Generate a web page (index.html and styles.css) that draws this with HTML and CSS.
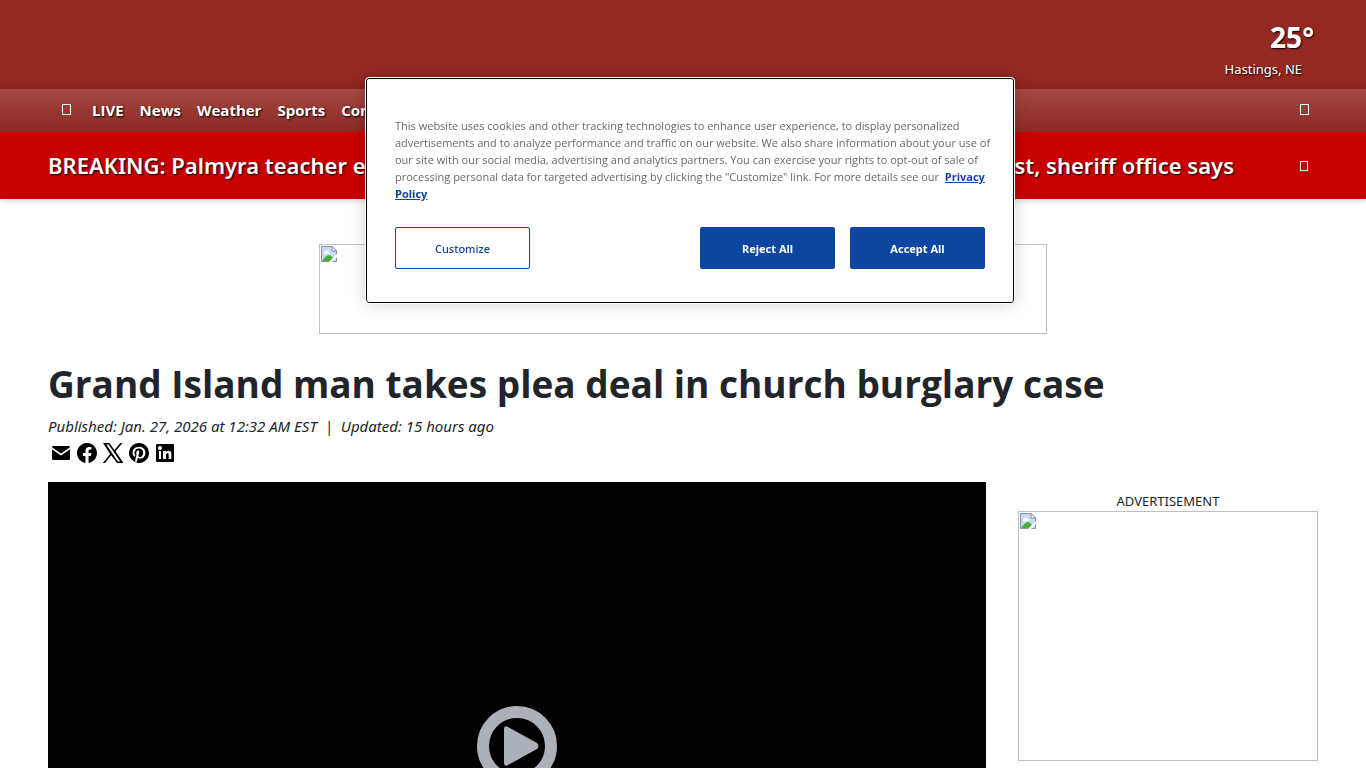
FILE: index.html
```html
<!DOCTYPE html>
<html lang="en">
<head>
    <meta charset="UTF-8">
    <meta name="viewport" content="width=device-width, initial-scale=1.0">
    <title>Grand Island man takes plea deal in church burglary case</title>
    <link rel="stylesheet" href="styles.css">
</head>
<body>
    <header>
        <div class="masthead">
            <a class="weather" href="#">
                <span class="temp">25°</span>
                <span class="city">Hastings, NE</span>
            </a>
        </div>
        <nav class="navbar">
            <button class="icon-btn menu-btn" aria-label="Menu"><span class="box"></span></button>
            <a href="#">LIVE</a>
            <a href="#">News</a>
            <a href="#">Weather</a>
            <a href="#">Sports</a>
            <a href="#">Contests</a>
            <button class="icon-btn search-btn" aria-label="Search"><span class="box"></span></button>
        </nav>
        <div class="breaking">
            <a class="breaking-link" href="#">
                <span>BREAKING: Palmyra teacher e</span>
                <span>st, sheriff office says</span>
            </a>
            <button class="icon-btn close-btn" aria-label="Close"><span class="box small"></span></button>
        </div>
    </header>

    <main class="page">
        <div class="ad leaderboard">
            <svg class="broken" viewBox="0 0 16 16"><use href="#broken-img"/></svg>
        </div>

        <h1>Grand Island man takes plea deal in church burglary case</h1>
        <p class="byline">Published: Jan. 27, 2026 at 12:32 AM EST&nbsp; |&nbsp; Updated: 15 hours ago</p>
        <div class="share">
            <a href="#" aria-label="Email"><svg viewBox="0 0 20 20"><path d="M1 4.200Q1 3 2.200 3H17.800Q19 3 19 4.200L10 10.500Z"/><path d="M1 6.200L10 12.500L19 6.200V15.800Q19 17 17.800 17H2.200Q1 17 1 15.800Z"/></svg></a>
            <a href="#" aria-label="Facebook"><svg viewBox="0 0 16 16"><path d="M16 8.049c0-4.446-3.582-8.050-8-8.050C3.580 0-.002 3.603-.002 8.050c0 4.017 2.926 7.347 6.750 7.951v-5.625h-2.030V8.050H6.750V6.275c0-2.017 1.195-3.131 3.022-3.131.876 0 1.791.157 1.791.157v1.980h-1.009c-.993 0-1.303.621-1.303 1.258v1.510h2.218l-.354 2.326H9.250V16c3.824-.604 6.750-3.934 6.750-7.951"/></svg></a>
            <a href="#" aria-label="X"><svg viewBox="0 0 20 20"><path fill-rule="evenodd" d="M0 0H6.300L11.500 7.100L17.300 0H19.500L12.500 8.300L20.500 20H14L8.200 12.300L2 20H-.200L7.200 11ZM3.300 1.600L14.800 18.400H17.200L5.600 1.600Z"/></svg></a>
            <a href="#" aria-label="Pinterest"><svg viewBox="0 0 16 16"><path d="M8 0a8 8 0 0 0-2.915 15.452c-.070-.633-.134-1.606.027-2.297.146-.625.938-3.977.938-3.977s-.239-.479-.239-1.187c0-1.113.645-1.943 1.448-1.943.682 0 1.012.512 1.012 1.127 0 .686-.437 1.712-.663 2.663-.188.796.400 1.446 1.185 1.446 1.422 0 2.515-1.500 2.515-3.664 0-1.915-1.377-3.254-3.342-3.254-2.276 0-3.612 1.707-3.612 3.471 0 .688.265 1.425.595 1.826a.240.240 0 0 1 .056.230c-.061.252-.196.796-.222.907-.035.146-.116.177-.268.107-1-.465-1.624-1.926-1.624-3.100 0-2.523 1.834-4.840 5.286-4.840 2.775 0 4.932 1.977 4.932 4.620 0 2.757-1.739 4.976-4.151 4.976-.811 0-1.573-.421-1.834-.919l-.498 1.902c-.181.695-.669 1.566-.995 2.097A8 8 0 1 0 8 0"/></svg></a>
            <a href="#" aria-label="LinkedIn"><svg viewBox="0 0 20 20"><rect x="1" y="1" width="18" height="18" rx="1"/><g fill="#fff"><circle cx="5" cy="5" r="2"/><rect x="4" y="8" width="2" height="8"/><path d="M8 8H11V9.200Q11.800 7.800 13.500 7.800Q16.300 7.800 16.300 11V16H13.700V11.700Q13.700 10 12.500 10Q11 10 11 11.800V16H8Z"/></g></svg></a>
        </div>

        <div class="columns">
            <div class="video">
                <button class="play" aria-label="Play video">
                    <svg viewBox="0 0 80 80"><circle cx="40" cy="40" r="34"/><path d="M27 23Q27 19 31 21L60 37Q63 40 60 43L31 59Q27 61 27 57Z"/></svg>
                </button>
            </div>
            <aside>
                <div class="ad-label">ADVERTISEMENT</div>
                <div class="ad box-ad">
                    <svg class="broken" viewBox="0 0 16 16">
                        <g id="broken-img">
                            <path fill="#c5d9f8" stroke="#8a8f98" d="M.5 .5H11L15.500 5V15.500H.5Z"/>
                            <path fill="#fff" stroke="#8a8f98" d="M11 .5V5H15.500Z"/>
                            <path fill="#fff" d="M3 7Q3 5 5 5Q7 3 8 6Q10 6 9 8H3Z"/>
                            <path fill="#4caf35" d="M1 15Q5 9 8 9Q10 9 12 12L9 15Z"/>
                            <path fill="#fff" d="M8 16L16 8V11L11 16Z"/>
                        </g>
                    </svg>
                </div>
            </aside>
        </div>
    </main>

    <div class="cookie" role="dialog" aria-label="Privacy">
        <p>This website uses cookies and other tracking technologies to enhance user experience, to display personalized<br>
            advertisements and to analyze performance and traffic on our website. We also share information about your use of<br>
            our site with our social media, advertising and analytics partners. You can exercise your rights to opt-out of sale of<br>
            processing personal data for targeted advertising by clicking the "Customize" link. For more details see our &nbsp;<a href="#">Privacy<br>
            Policy</a></p>
        <div class="cookie-actions">
            <button class="customize">Customize</button>
            <button>Reject All</button>
            <button>Accept All</button>
        </div>
    </div>
</body>
</html>
```
FILE: styles.css
```css
* {
    box-sizing: border-box;
}
body {
    margin: 0;
    font-family: "Noto Sans", "Open Sans", sans-serif;
    font-size: 16px;
    color: #212529;
    background: #fff;
    overflow: hidden;
}
a {
    color: inherit;
    text-decoration: none;
}
button {
    font-family: inherit;
    cursor: pointer;
}
header {
    color: #fff;
    text-shadow: 1px 1px 2px #000;
    box-shadow: 0 2px 6px rgba(0, 0, 0, 0.15);
}
.masthead {
    height: 89px;
    padding: 16px 48px;
    background: linear-gradient(#962822 85%, #8a241e);
    display: flex;
    justify-content: flex-end;
}
.weather {
    display: flex;
    flex-direction: column;
    align-items: flex-end;
}
.temp {
    font-size: 28px;
    font-weight: 700;
    line-height: 42px;
    padding-right: 4px;
}
.city {
    font-size: 13px;
    line-height: 22px;
    padding-right: 16px;
}
.navbar {
    height: 43px;
    padding: 0 48px 2px;
    display: flex;
    align-items: center;
    gap: 16px;
    font-family: "Open Sans", sans-serif;
    font-size: 15px;
    font-weight: 700;
    background: linear-gradient(#a54842, #8c2a24);
}
.icon-btn {
    border: 0;
    padding: 0;
    background: none;
    display: flex;
    justify-content: center;
}
.menu-btn {
    width: 28px;
    padding-left: 8px;
}
.search-btn {
    margin-left: auto;
    width: 28px;
}
.box {
    width: 9px;
    height: 11px;
    border: 1px solid #fff;
}
.box.small {
    width: 8px;
    height: 10px;
}
.breaking {
    height: 67px;
    padding: 0 48px;
    display: flex;
    align-items: center;
    background: #c90000;
}
.breaking-link {
    flex: 1;
    display: flex;
    justify-content: space-between;
    font-size: 22px;
    line-height: 30px;
    font-weight: 600;
    white-space: nowrap;
    padding-bottom: 2px;
}
.close-btn {
    width: 28px;
    margin-left: 56px;
}
.page {
    padding: 45px 48px 0;
}
.ad {
    border: 1px solid #c0c0c0;
    padding: 1px;
}
.broken {
    display: block;
    width: 16px;
    height: 16px;
}
.leaderboard {
    width: 728px;
    height: 90px;
    margin: 0 auto 26px;
}
h1 {
    margin: 0;
    font-family: "Open Sans", sans-serif;
    font-size: 37px;
    line-height: 48px;
    font-weight: 700;
}
.byline {
    margin: 6px 0 0;
    font-size: 15px;
    line-height: 24px;
    font-style: italic;
}
.share {
    display: flex;
    gap: 6px;
    padding: 5px 3px 0;
}
.share a {
    display: block;
    width: 20px;
    height: 20px;
}
.share svg {
    display: block;
    width: 20px;
    height: 20px;
    fill: #000;
}
.columns {
    display: flex;
    gap: 32px;
    margin-top: 19px;
}
.video {
    flex: 1;
    aspect-ratio: 16 / 9;
    background: #000;
    display: flex;
    align-items: center;
    justify-content: center;
}
.play {
    width: 80px;
    height: 80px;
    padding: 0;
    border: 0;
    background: none;
}
.play svg {
    display: block;
}
.play circle {
    fill: none;
    stroke: #abb0b9;
    stroke-width: 12px;
}
.play path {
    fill: #abb0b9;
}
aside {
    width: 300px;
    padding-top: 9px;
}
.ad-label {
    font-size: 13px;
    line-height: 20px;
    text-align: center;
}
.box-ad {
    height: 250px;
}
.cookie {
    position: fixed;
    top: 78px;
    left: 14px;
    right: 0;
    margin: 0 auto;
    width: 648px;
    padding: 38px 28px 33px;
    background: #fff;
    border: 1px solid #000;
    border-radius: 3px;
    outline: 1px solid #fff;
    box-shadow: 0 0 18px rgba(0, 0, 0, 0.2);
}
.cookie p {
    margin: 0;
    font-family: "Open Sans", sans-serif;
    font-size: 11px;
    line-height: 17px;
    color: #696969;
    white-space: nowrap;
}
.cookie a {
    color: #0c46a0;
    font-weight: 700;
    text-decoration: underline;
}
.cookie-actions {
    display: flex;
    justify-content: flex-end;
    gap: 15px;
    margin-top: 25px;
}
.cookie-actions button {
    width: 135px;
    height: 42px;
    border: 1px solid #0c46a0;
    border-radius: 2px;
    background: #0c46a0;
    color: #fff;
    font-size: 11px;
    font-weight: 700;
}
.cookie-actions .customize {
    margin-right: auto;
    background: #fff;
    color: #0c46a0;
    font-weight: 500;
}
```
